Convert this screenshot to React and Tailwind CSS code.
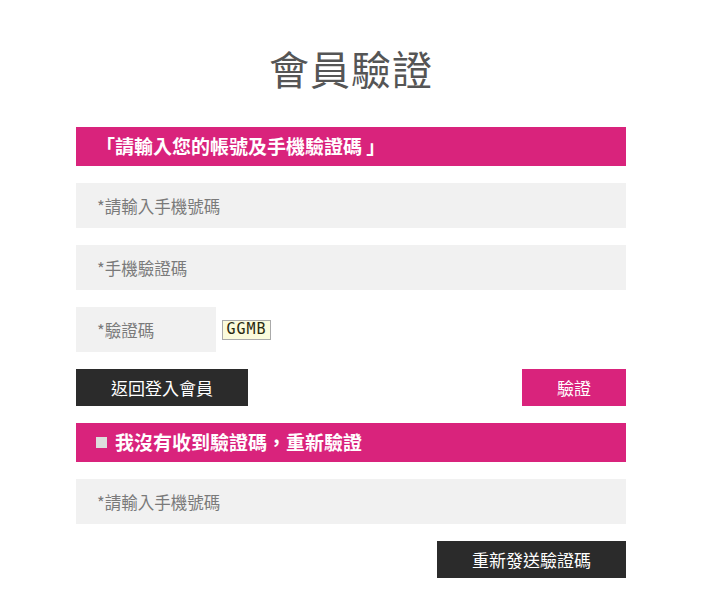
import React from 'react';

const font = { fontFamily: '"Noto Sans CJK TC", "Noto Sans", sans-serif' };

const Field = ({ placeholder, className = 'w-full' }) => (
  <input
    type="text"
    placeholder={placeholder}
    className={`${className} h-[45px] bg-[#f1f1f1] px-[21px] text-[16.5px] text-[#555] placeholder:text-[#7a7a7a] outline-none`}
  />
);

const Bar = ({ children }) => (
  <div className="h-[39px] bg-[#d9237c] flex items-center px-[20px] text-white text-[19px] font-bold">
    {children}
  </div>
);

export default function App() {
  return (
    <div className="w-[708px] h-[603px] bg-white" style={font}>
      <div className="ml-[76px] w-[550px] flex flex-col gap-[17px]">
        <h1 className="pt-[40px] mb-[14px] text-center text-[40px] leading-[56px] text-[#555] tracking-[1px]">會員驗證</h1>
        <Bar>「請輸入您的帳號及手機驗證碼 」</Bar>
        <Field placeholder="*請輸入手機號碼" />
        <Field placeholder="*手機驗證碼" />
        <div className="flex items-center gap-[6px]">
          <Field placeholder="*驗證碼" className="w-[140px]" />
          <span className="h-[20px] w-[49px] border border-[#aaa] bg-[#fbfbdc] flex items-center justify-center text-[15px] font-medium text-[#2a2a10] tracking-[1px]" style={{ fontFamily: '"DejaVu Sans Mono", monospace' }}>
            GGMB
          </span>
        </div>
        <div className="flex justify-between">
          <button className="h-[37px] w-[172px] bg-[#2b2b2b] text-white text-[17px]">返回登入會員</button>
          <button className="h-[37px] w-[104px] bg-[#d9237c] text-white text-[17px]">驗證</button>
        </div>
        <Bar>
          <span className="w-[11px] h-[11px] bg-[#ddd] mr-[8px] inline-block"></span>
          我沒有收到驗證碼，重新驗證
        </Bar>
        <Field placeholder="*請輸入手機號碼" />
        <div className="flex justify-end">
          <button className="h-[37px] w-[189px] bg-[#2b2b2b] text-white text-[17px]">重新發送驗證碼</button>
        </div>
      </div>
    </div>
  );
}
